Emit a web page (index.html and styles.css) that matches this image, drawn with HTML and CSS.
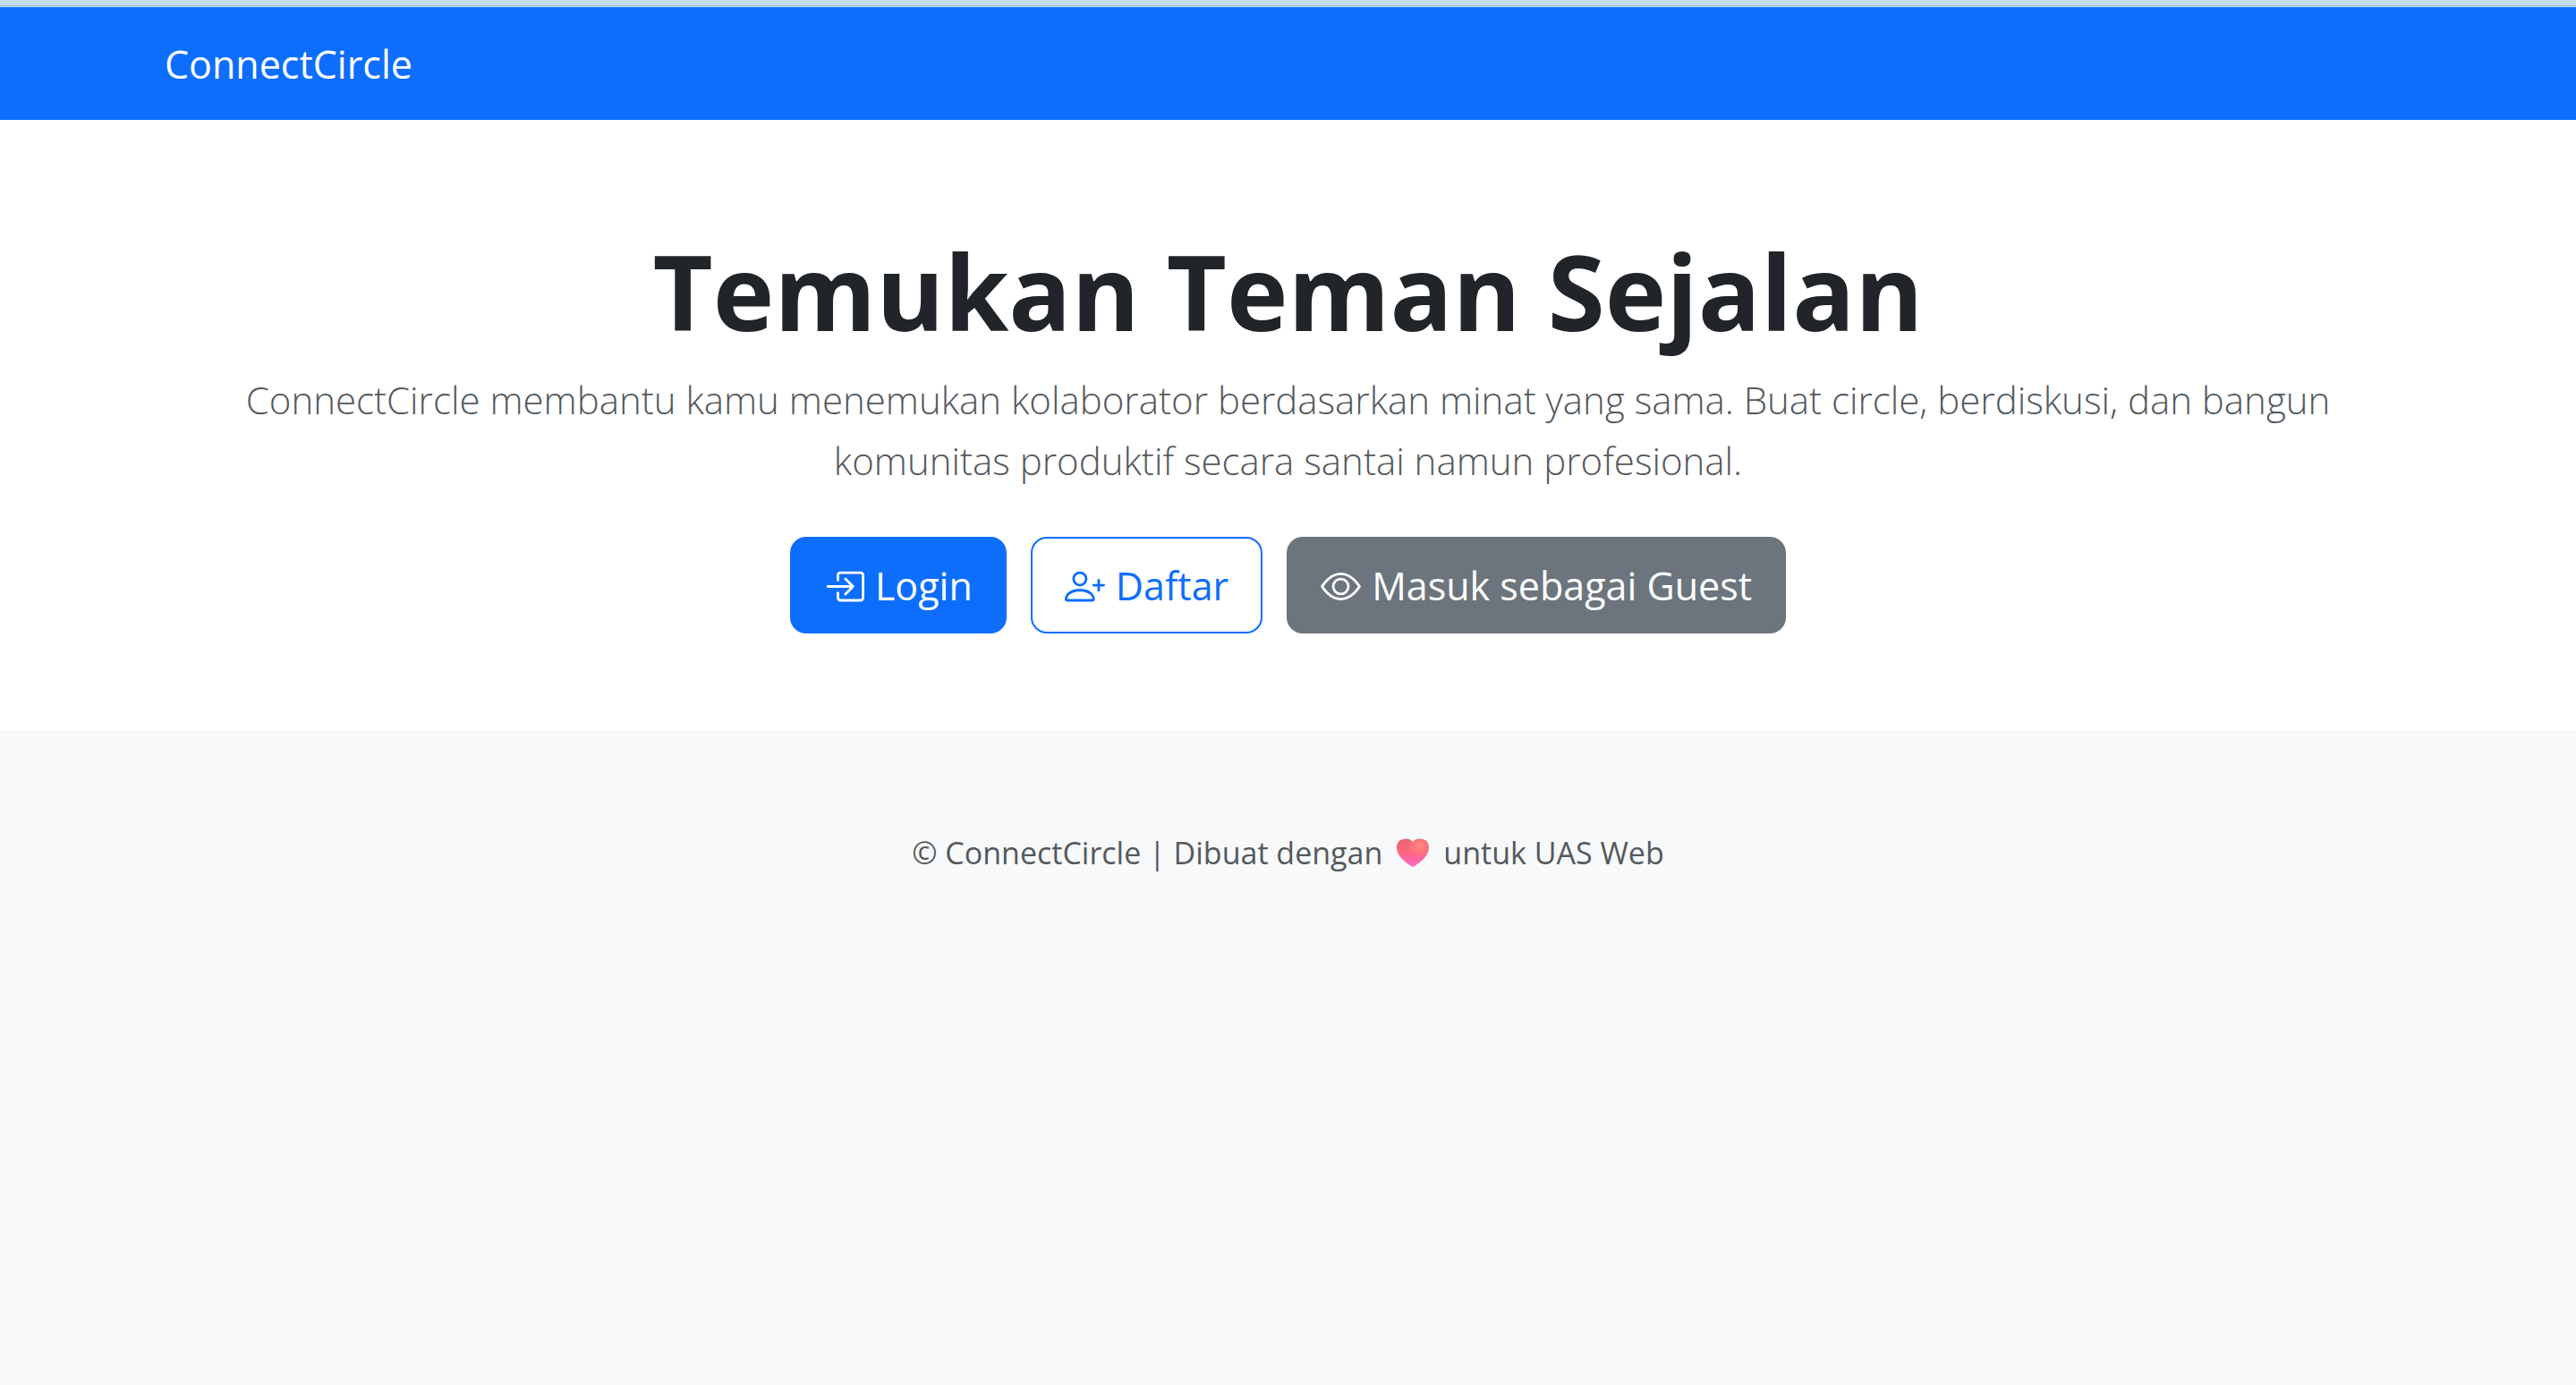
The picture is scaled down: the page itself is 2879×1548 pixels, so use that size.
FILE: index.html
```html
<!DOCTYPE html>
<html lang="id">
<head>
<meta charset="utf-8">
<meta name="viewport" content="width=device-width, initial-scale=1">
<title>ConnectCircle</title>
<link rel="stylesheet" href="styles.css">
</head>
<body>
<div class="strip"></div>
<header class="topbar">
  <nav class="container"><a class="brand" href="#">ConnectCircle</a></nav>
</header>
<main class="hero">
  <div class="container">
    <h1 class="title">Temukan Teman Sejalan</h1>
    <p class="lead">ConnectCircle membantu kamu menemukan kolaborator berdasarkan minat yang sama. Buat circle, berdiskusi, dan bangun komunitas produktif secara santai namun profesional.</p>
    <div class="actions">
      <a class="btn btn-primary" href="#"><svg class="icon" viewBox="0 0 16 16" aria-hidden="true"><path fill-rule="evenodd" d="M6 3.5a.5.5 0 0 1 .5-.5h8a.5.5 0 0 1 .5.5v9a.5.5 0 0 1-.5.5h-8a.5.5 0 0 1-.5-.5v-2a.5.5 0 0 0-1 0v2A1.5 1.5 0 0 0 6.5 14h8a1.5 1.5 0 0 0 1.5-1.5v-9A1.5 1.5 0 0 0 14.5 2h-8A1.5 1.5 0 0 0 5 3.5v2a.5.5 0 0 0 1 0z"/><path fill-rule="evenodd" d="M11.854 8.354a.5.5 0 0 0 0-.708l-3-3a.5.5 0 1 0-.708.708L10.293 7.5H1.5a.5.5 0 0 0 0 1h8.793l-2.147 2.146a.5.5 0 0 0 .708.708z"/></svg>Login</a>
      <a class="btn btn-outline" href="#"><svg class="icon" viewBox="0 0 16 16" aria-hidden="true"><path d="M6 8a3 3 0 1 0 0-6 3 3 0 0 0 0 6m2-3a2 2 0 1 1-4 0 2 2 0 0 1 4 0m4 8c0 1-1 1-1 1H1s-1 0-1-1 1-4 6-4 6 3 6 4m-1-.004c-.001-.246-.154-.986-.832-1.664C9.516 10.68 8.289 10 6 10s-3.516.68-4.168 1.332c-.678.678-.83 1.418-.832 1.664z"/><path fill-rule="evenodd" d="M13.5 5a.5.5 0 0 1 .5.5V7h1.5a.5.5 0 0 1 0 1H14v1.5a.5.5 0 0 1-1 0V8h-1.5a.5.5 0 0 1 0-1H13V5.5a.5.5 0 0 1 .5-.5"/></svg>Daftar</a>
      <a class="btn btn-secondary" href="#"><svg class="icon" viewBox="0 0 16 16" aria-hidden="true"><path d="M16 8s-3-5.5-8-5.5S0 8 0 8s3 5.5 8 5.5S16 8 16 8M1.173 8a13 13 0 0 1 1.66-2.043C4.12 4.668 5.88 3.5 8 3.5s3.879 1.168 5.168 2.457A13 13 0 0 1 14.828 8q-.086.13-.195.288c-.335.48-.83 1.12-1.465 1.755C11.879 11.332 10.119 12.5 8 12.5s-3.879-1.168-5.168-2.457A13 13 0 0 1 1.172 8z"/><path d="M8 5.5a2.5 2.5 0 1 0 0 5 2.5 2.5 0 0 0 0-5M4.5 8a3.5 3.5 0 1 1 7 0 3.5 3.5 0 0 1-7 0"/></svg>Masuk sebagai Guest</a>
    </div>
  </div>
</main>
<footer class="footer">
  <span>© ConnectCircle | Dibuat dengan</span>
  <svg class="heart" viewBox="0 0 36 32" role="img" aria-label="cinta">
    <defs>
      <linearGradient id="heart-fill" x1="0" y1="0" x2="0" y2="1"><stop offset="0" stop-color="#e8646e"/><stop offset=".5" stop-color="#ff6480"/><stop offset="1" stop-color="#f76cc4"/></linearGradient>
      <radialGradient id="heart-glow" cx=".72" cy=".25" r=".4"><stop offset="0" stop-color="#ff8a80"/><stop offset="1" stop-color="#ff8a80" stop-opacity="0"/></radialGradient>
    </defs>
    <path fill="url(#heart-fill)" d="M18 4C15 0 10 0 7 1C2 2 0 6 0 10C0 20 10 27 16 31Q18 32 20 31C26 27 36 20 36 10C36 6 34 2 29 1C26 0 21 0 18 4Z"/>
    <path fill="url(#heart-glow)" d="M18 4C15 0 10 0 7 1C2 2 0 6 0 10C0 20 10 27 16 31Q18 32 20 31C26 27 36 20 36 10C36 6 34 2 29 1C26 0 21 0 18 4Z"/>
  </svg>
  <span>untuk UAS Web</span>
</footer>
</body>
</html>
```
FILE: styles.css
```css
* { box-sizing: border-box; }
body {
  margin: 0;
  background: #f8f9fa;
  color: #212529;
  font-family: "Open Sans", "Noto Sans", sans-serif;
  font-size: 34px;
  line-height: 54px;
}
.container {
  max-width: 2565px;
  margin: 0 auto;
  padding: 0 27px;
}
.strip {
  height: 8px;
  background: linear-gradient(#c4e0f0 6px, #9cbac4 6px 7px, #c4e0f0 7px);
}
.topbar {
  padding: 30px 0 28px;
  background: #0d6efd;
}
.brand {
  display: block;
  width: fit-content;
  color: #fff;
  font-size: 43px;
  line-height: 68px;
  text-decoration: none;
}
.hero {
  padding: 116px 0 108px;
  background: #fff;
  text-align: center;
}
.title {
  margin: 0 0 12px;
  font-size: 116px;
  font-weight: 700;
  line-height: 151px;
}
.lead {
  max-width: 2400px;
  margin: 0 auto 51px;
  color: #54595e;
  font-size: 42px;
  font-weight: 300;
  line-height: 68px;
}
.actions {
  display: flex;
  flex-wrap: wrap;
  justify-content: center;
  gap: 27px;
}
.btn {
  display: flex;
  align-items: center;
  gap: 12px;
  padding: 19px 36px 17px;
  border: 2px solid transparent;
  border-radius: 18px;
  color: #fff;
  font-size: 43px;
  line-height: 68px;
  text-decoration: none;
}
.btn-primary { border-color: #0d6efd; background: #0d6efd; }
.btn-outline { border-color: #0d6efd; color: #0d6efd; }
.btn-secondary { border-color: #6c757d; background: #6c757d; }
.icon {
  width: 45px;
  height: 45px;
  fill: currentColor;
}
.footer {
  display: flex;
  align-items: center;
  justify-content: center;
  gap: 16px;
  padding: 110px 27px;
  color: #54595e;
}
.heart {
  width: 36px;
  height: 32px;
}
```
